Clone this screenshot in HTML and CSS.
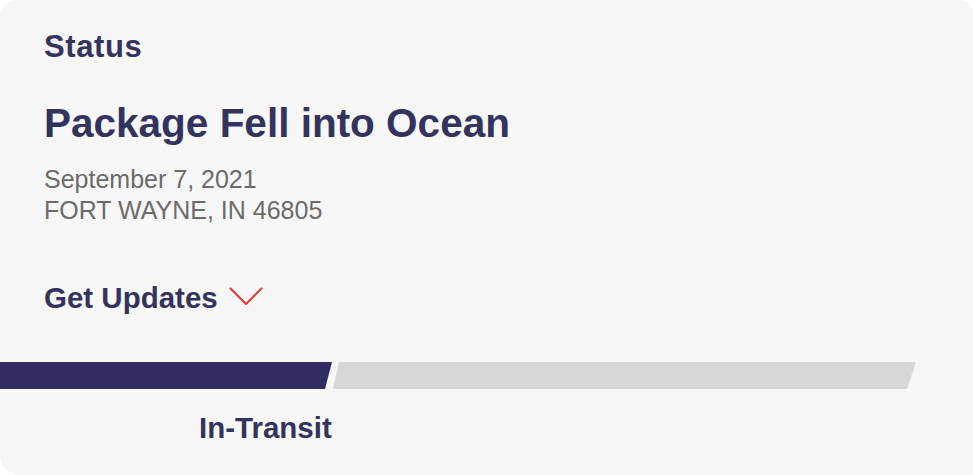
FILE: index.html
```html
<!DOCTYPE html>
<html lang="en">
<head>
<meta charset="utf-8">
<title>Status</title>
<link rel="stylesheet" href="styles.css">
</head>
<body>
<div class="card">
  <div class="content">
    <div class="label">Status</div>
    <div class="title">Package Fell into Ocean</div>
    <div class="meta">
      <div>September 7, 2021</div>
      <div>FORT WAYNE, IN 46805</div>
    </div>
    <div class="updates">
      <span>Get Updates</span>
      <svg class="chev" width="34" height="19" viewBox="0 0 34 19"><path d="M1.5 1.5 L17 17 L32.5 1.5" fill="none" stroke="#e0403c" stroke-width="2.2" stroke-linecap="round" stroke-linejoin="round"/></svg>
    </div>
  </div>
  <div class="progress">
    <div class="bar done"></div>
    <div class="bar todo"></div>
  </div>
  <div class="step">In-Transit</div>
</div>
</body>
</html>
```
FILE: styles.css
```css
html, body {
  margin: 0;
  padding: 0;
  background: #ffffff;
}
body {
  font-family: "Liberation Sans", Arial, sans-serif;
}
.card {
  width: 973px;
  height: 475px;
  box-sizing: border-box;
  background: #f7f7f7;
  border-radius: 16px 14px 0 20px;
  padding-top: 32px;
  overflow: hidden;
}
.content {
  padding-left: 44px;
}
.label {
  font-size: 31px;
  line-height: 30px;
  font-weight: 700;
  color: #33335f;
  letter-spacing: 0.6px;
}
.title {
  margin-top: 41px;
  font-size: 40.5px;
  line-height: 40px;
  font-weight: 700;
  color: #33335f;
}
.meta {
  margin-top: 21px;
  font-size: 25px;
  line-height: 31px;
  color: #6b6b6b;
}
.updates {
  margin-top: 57px;
  display: flex;
  align-items: flex-start;
  gap: 11px;
  font-size: 29.5px;
  line-height: 29px;
  font-weight: 700;
  color: #33335f;
}
.chev {
  margin-top: 4px;
}
.progress {
  margin-top: 50px;
  display: flex;
  height: 27px;
}
.bar {
  height: 27px;
}
.done {
  width: 332px;
  background: #312d63;
  clip-path: polygon(0 0, 100% 0, calc(100% - 7px) 100%, 0 100%);
}
.todo {
  width: 584px;
  background: #d7d7d7;
  clip-path: polygon(7px 0, 100% 0, calc(100% - 9px) 100%, 1px 100%);
}
.step {
  margin-top: 24px;
  padding-left: 199px;
  font-size: 29.5px;
  line-height: 29px;
  font-weight: 700;
  color: #33335f;
}
```
